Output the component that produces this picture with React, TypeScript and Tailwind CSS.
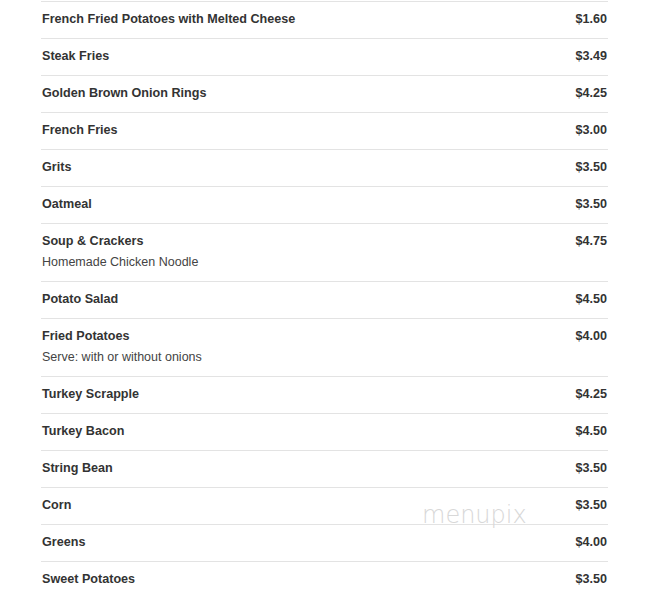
const items: { name: string; price: string; desc?: string }[] = [
  { name: "French Fried Potatoes with Melted Cheese", price: "$1.60" },
  { name: "Steak Fries", price: "$3.49" },
  { name: "Golden Brown Onion Rings", price: "$4.25" },
  { name: "French Fries", price: "$3.00" },
  { name: "Grits", price: "$3.50" },
  { name: "Oatmeal", price: "$3.50" },
  { name: "Soup & Crackers", price: "$4.75", desc: "Homemade Chicken Noodle" },
  { name: "Potato Salad", price: "$4.50" },
  { name: "Fried Potatoes", price: "$4.00", desc: "Serve: with or without onions" },
  { name: "Turkey Scrapple", price: "$4.25" },
  { name: "Turkey Bacon", price: "$4.50" },
  { name: "String Bean", price: "$3.50" },
  { name: "Corn", price: "$3.50" },
  { name: "Greens", price: "$4.00" },
  { name: "Sweet Potatoes", price: "$3.50" },
];

export default function App() {
  return (
    <div className="relative h-[595px] w-[656px] overflow-hidden bg-white font-['Liberation_Sans',Arial,sans-serif] text-[#333]">
      <div className="ml-[41px] w-[567px] pt-px">
        {items.map((item) => (
          <div key={item.name} className="border-t border-[#e3e3e3] px-px pt-[9px] pb-[11px]">
            <div className="flex items-start justify-between text-[12.6px] font-bold leading-4">
              <span>{item.name}</span>
              <span>{item.price}</span>
            </div>
            {item.desc && (
              <div className="pt-[5px] text-[12.5px] leading-4 text-[#444]">{item.desc}</div>
            )}
          </div>
        ))}
      </div>
      <div className="pointer-events-none absolute left-[422px] top-[497px] text-[24px] font-extralight text-[#d8d8d8] font-['DejaVu_Sans',sans-serif]">
        menupix
      </div>
    </div>
  );
}
